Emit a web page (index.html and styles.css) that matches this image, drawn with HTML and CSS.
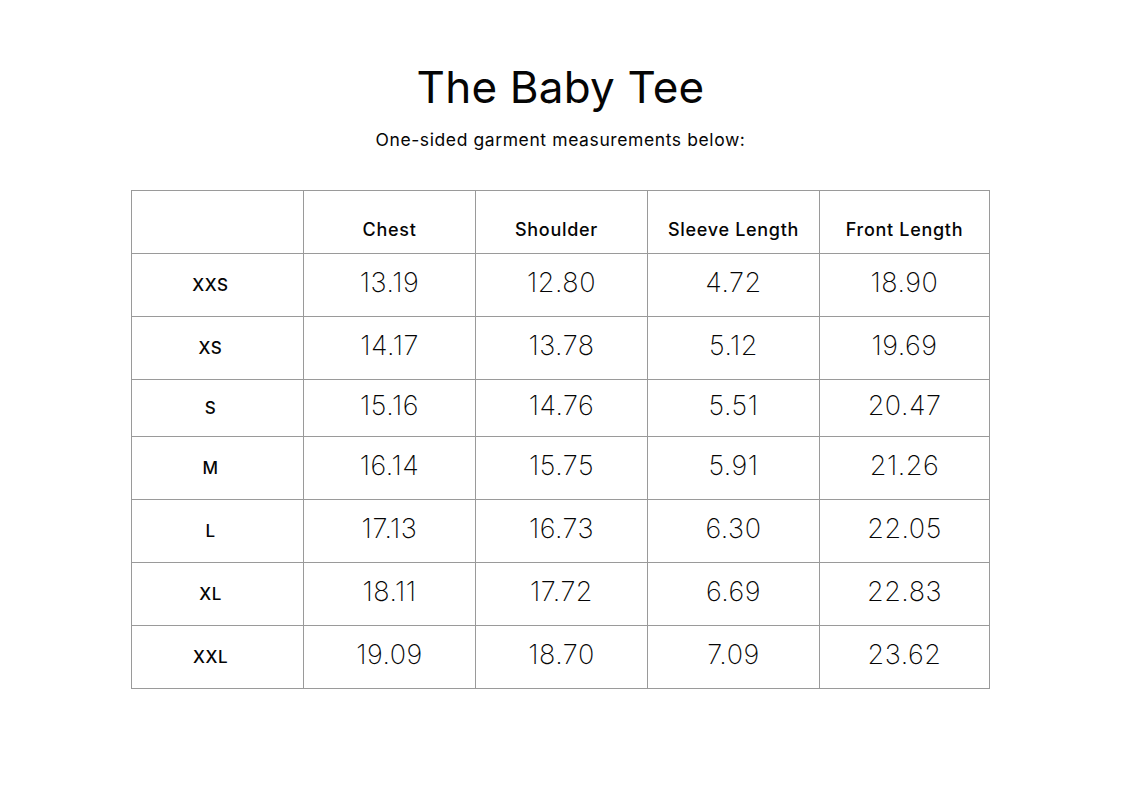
FILE: index.html
```html
<!DOCTYPE html>
<html lang="en">
<head>
<meta charset="utf-8">
<title>The Baby Tee</title>
<link rel="stylesheet" href="styles.css">
</head>
<body>
<main class="page">
  <h1 class="title">The Baby Tee</h1>
  <p class="subtitle">One-sided garment measurements below:</p>
  <div class="chart">
    <div class="cell head"></div>
    <div class="cell head">Chest</div>
    <div class="cell head head-shift">Shoulder</div>
    <div class="cell head">Sleeve Length</div>
    <div class="cell head">Front Length</div>

    <div class="cell size">XXS</div>
    <div class="cell num">13.19</div>
    <div class="cell num">12.80</div>
    <div class="cell num">4.72</div>
    <div class="cell num">18.90</div>

    <div class="cell size">XS</div>
    <div class="cell num">14.17</div>
    <div class="cell num">13.78</div>
    <div class="cell num">5.12</div>
    <div class="cell num">19.69</div>

    <div class="cell size">S</div>
    <div class="cell num">15.16</div>
    <div class="cell num">14.76</div>
    <div class="cell num">5.51</div>
    <div class="cell num">20.47</div>

    <div class="cell size">M</div>
    <div class="cell num">16.14</div>
    <div class="cell num">15.75</div>
    <div class="cell num">5.91</div>
    <div class="cell num">21.26</div>

    <div class="cell size">L</div>
    <div class="cell num">17.13</div>
    <div class="cell num">16.73</div>
    <div class="cell num">6.30</div>
    <div class="cell num">22.05</div>

    <div class="cell size">XL</div>
    <div class="cell num">18.11</div>
    <div class="cell num">17.72</div>
    <div class="cell num">6.69</div>
    <div class="cell num">22.83</div>

    <div class="cell size">XXL</div>
    <div class="cell num">19.09</div>
    <div class="cell num">18.70</div>
    <div class="cell num">7.09</div>
    <div class="cell num">23.62</div>
  </div>
</main>
</body>
</html>
```
FILE: styles.css
```css
html, body {
  margin: 0;
  padding: 0;
  background: #ffffff;
}

body {
  font-family: Inter, "Open Sans", "DejaVu Sans", sans-serif;
  color: #050505;
}

.page {
  display: flex;
  flex-direction: column;
  align-items: center;
  padding-top: 65px;
}

.title {
  margin: 0;
  font-size: 44px;
  line-height: 44px;
  font-weight: 400;
  letter-spacing: 0.2px;
}

.subtitle {
  margin: 21px 0 0;
  font-size: 17.5px;
  line-height: 20px;
  font-weight: 400;
  letter-spacing: 0.6px;
}

.chart {
  margin-top: 40px;
  display: grid;
  grid-template-columns: 171px 171px 171px 171px 169px;
  grid-template-rows: 62px 62px 62px 56px 62px 62px 62px 62px;
  gap: 1px;
  background: #9a9a9a;
  border: 1px solid #9a9a9a;
}

.cell {
  background: #ffffff;
  display: flex;
  align-items: center;
  justify-content: center;
  text-align: center;
}

.head {
  padding-top: 15px;
  font-size: 18px;
  line-height: 20px;
  font-weight: 500;
  letter-spacing: 0.7px;
}

.head-shift {
  padding-right: 10px;
}

.size {
  padding-right: 14px;
  font-size: 17px;
  line-height: 20px;
  font-weight: 500;
  letter-spacing: 0.6px;
}

.num {
  padding-bottom: 4px;
  font-size: 27px;
  line-height: 30px;
  font-weight: 250;
  letter-spacing: 0.5px;
}
```
